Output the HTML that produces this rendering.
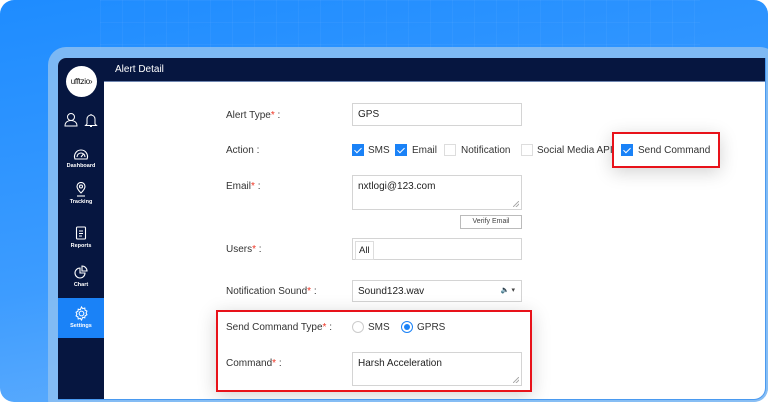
<!DOCTYPE html>
<html><head><meta charset="utf-8"><style>
*{box-sizing:border-box;margin:0;padding:0}
body{width:768px;height:402px;overflow:hidden;background:#fff;font-family:"Liberation Sans",sans-serif;position:relative}
.bg{position:absolute;left:0;top:0;width:768px;height:402px;border-radius:14px;background:linear-gradient(170deg,#1e8cff 0%,#3d9cff 55%,#72b6fb 100%);overflow:hidden}
.grid{position:absolute;left:100px;top:0;width:600px;height:50px;background-image:linear-gradient(90deg,rgba(255,255,255,.04) 1px,transparent 1px),linear-gradient(rgba(255,255,255,.04) 1px,transparent 1px);background-size:22px 22px}
.rim{position:absolute;left:48px;top:47px;width:730px;height:370px;border-radius:18px;background:#8cc0f2;opacity:.85}
.app{position:absolute;left:58px;top:58px;width:708px;height:342px;border-radius:8px 0 12px 0;background:#fff;overflow:hidden;border-right:1.5px solid #4a9af0;border-bottom:1.5px solid #4a9af0}
.side{position:absolute;left:0;top:0;width:46px;height:342px;background:#061640}
.hdr{position:absolute;left:46px;top:0;right:0;height:24px;background:#061640;border-bottom:1px solid #6f86b0;color:#fff;font-size:10px;line-height:24px;padding-left:11px}
.logo{position:absolute;left:8px;top:8px;width:31px;height:31px;border-radius:50%;background:#fff;font-size:8px;line-height:31px;text-align:center;color:#111;letter-spacing:-.3px}
.nav{position:absolute;left:0;width:46px;text-align:center;color:#fff;font-size:5.5px;font-weight:bold}
.nav svg{display:block;margin:0 auto 2px}
.set{background:#1a82f7}
.lbl{position:absolute;left:168px;font-size:10px;color:#333}
.lbl b{color:#e32;font-weight:normal}
.inp{position:absolute;left:294px;width:170px;border:1px solid #d4d4d4;background:#fff;font-size:10px;color:#222;padding:5px 5px}
.cb{position:absolute;width:12px;height:12px;border:1px solid #ddd;background:#fff}
.cb.on{background:#1a82f7;border-color:#1a82f7}
.cb.on:after{content:"";position:absolute;left:3px;top:1px;width:3px;height:6px;border:solid #fff;border-width:0 1.5px 1.5px 0;transform:rotate(45deg)}
.t{position:absolute;font-size:10px;color:#333}
.rb{position:absolute;width:12px;height:12px;border-radius:50%;border:1px solid #ccc;background:#fff}
.rb.on{border-color:#1a82f7}
.rb.on:after{content:"";position:absolute;left:2px;top:2px;width:6px;height:6px;border-radius:50%;background:#1a82f7}
.redbox{position:absolute;border:2px solid #e8121a;background:#fff;box-shadow:0 4px 18px rgba(0,0,0,.18)}
.grip{position:absolute;right:2px;bottom:2px;width:6px;height:6px;background:linear-gradient(135deg,transparent 45%,#aaa 46%,#aaa 55%,transparent 56%,transparent 70%,#aaa 71%,#aaa 80%,transparent 81%)}
</style></head><body>
<div class="bg"><div class="grid"></div><div class="rim"></div></div>
<div class="app">
 <div class="side">
  <div class="logo">ufftzio&#8250;</div>
  <svg style="position:absolute;left:5px;top:54px" width="36" height="16" viewBox="0 0 36 16" fill="none" stroke="#fff" stroke-width="1"><circle cx="8" cy="5" r="3.5"/><path d="M2 14c0-4 3-5.5 6-5.5s6 1.5 6 5.5z"/><path d="M24 12V7a4 4 0 018 0v5l1.5 1.5h-11z M27 14.5h2 M28 2v1"/></svg>
  <div class="nav" style="top:90px"><svg width="16" height="13" viewBox="0 0 16 13" fill="none" stroke="#fff" stroke-width="1.1"><path d="M2 11a6.5 6.5 0 1112 0z"/><path d="M4 9a4 4 0 018 0"/><path d="M8 9l2.5-3"/></svg>Dashboard</div>
  <div class="nav" style="top:124px"><svg width="12" height="15" viewBox="0 0 12 15" fill="none" stroke="#fff" stroke-width="1.1"><path d="M6 11S2 7 2 4.5a4 4 0 018 0C10 7 6 11 6 11z"/><circle cx="6" cy="4.5" r="1.5"/><path d="M2 14h8"/></svg>Tracking</div>
  <div class="nav" style="top:168px"><svg width="12" height="15" viewBox="0 0 12 15" fill="none" stroke="#fff" stroke-width="1.1"><rect x="1.5" y="1" width="9" height="12" rx="1"/><path d="M4 5h4M4 7.5h4M4 10h3"/></svg>Reports</div>
  <div class="nav" style="top:207px"><svg width="14" height="15" viewBox="0 0 14 15" fill="none" stroke="#fff" stroke-width="1.1"><path d="M6 3a5 5 0 105 5H6z"/><path d="M8 1v5h5a5 5 0 00-5-5z"/></svg>Chart</div>
  <div class="nav set" style="top:240px;height:40px;padding-top:8px"><svg width="15" height="15" viewBox="0 0 16 16" fill="none" stroke="#fff" stroke-width="1.1"><circle cx="8" cy="8" r="2.5"/><path d="M8 1l1.3 1.8 2.2-.6.3 2.2 2 1-.9 2 .9 2-2 1-.3 2.2-2.2-.6L8 15l-1.3-1.8-2.2.6-.3-2.2-2-1 .9-2-.9-2 2-1 .3-2.2 2.2.6z"/></svg>Settings</div>
 </div>
 <div class="hdr">Alert Detail</div>

 <div class="lbl" style="top:52px">Alert Type<b>*</b> :</div>
 <div class="inp" style="top:45px;height:23px">GPS</div>

 <div class="lbl" style="top:87px">Action :</div>
 <div class="cb on" style="left:294px;top:86px"></div><div class="t" style="left:310px;top:87px">SMS</div>
 <div class="cb on" style="left:337px;top:86px"></div><div class="t" style="left:354px;top:87px">Email</div>
 <div class="cb" style="left:386px;top:86px"></div><div class="t" style="left:403px;top:87px">Notification</div>
 <div class="cb" style="left:463px;top:86px"></div><div class="t" style="left:479px;top:87px">Social Media API</div>
 <div class="redbox" style="left:554px;top:74px;width:108px;height:36px"></div>
 <div class="cb on" style="left:563px;top:86px"></div><div class="t" style="left:580px;top:87px">Send Command</div>

 <div class="lbl" style="top:123px">Email<b>*</b> :</div>
 <div class="inp" style="top:117px;height:35px">nxtlogi@123.com<div class="grip"></div></div>
 <div class="inp" style="left:402px;width:62px;top:157px;height:14px;font-size:7px;padding:2px 0;text-align:center;color:#444;border-color:#bbb">Verify Email</div>

 <div class="lbl" style="top:186px">Users<b>*</b> :</div>
 <div class="inp" style="top:180px;height:22px;padding:2px"><span style="display:inline-block;border:1px solid #ddd;padding:3px 3px;font-size:9.5px">All</span></div>

 <div class="lbl" style="top:228px">Notification Sound<b>*</b> :</div>
 <div class="inp" style="top:222px;height:22px">Sound123.wav<span style="position:absolute;right:6px;top:5px;font-size:7px;color:#444">&#128264; &#9662;</span></div>

 <div class="redbox" style="left:158px;top:252px;width:316px;height:82px"></div>
 <div class="lbl" style="top:264px">Send Command Type<b>*</b> :</div>
 <div class="rb" style="left:294px;top:263px"></div><div class="t" style="left:310px;top:264px">SMS</div>
 <div class="rb on" style="left:343px;top:263px"></div><div class="t" style="left:359px;top:264px">GPRS</div>
 <div class="lbl" style="top:300px">Command<b>*</b> :</div>
 <div class="inp" style="top:294px;height:34px">Harsh Acceleration<div class="grip"></div></div>
</div>
</body></html>
